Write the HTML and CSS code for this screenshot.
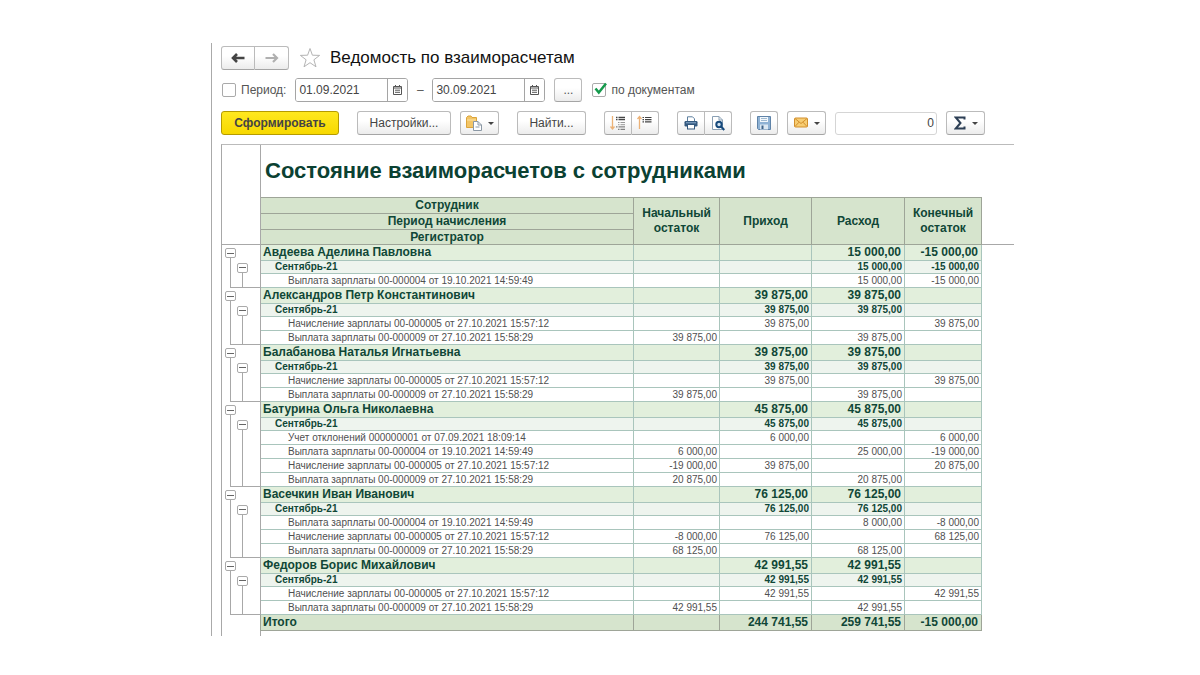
FILE: index.html
```html
<!DOCTYPE html>
<html lang="ru">
<head>
<meta charset="utf-8">
<title>Ведомость по взаиморасчетам</title>
<link rel="stylesheet" href="styles.css">
</head>
<body>
<main class="window">
  <header class="titlebar">
    <div class="group">
      <button class="btn nav" aria-label="Назад"><svg width="14" height="10" viewBox="0 0 14 10"><path d="M2 5H13.500M6 1L2 5L6 9" fill="none" stroke="#444" stroke-width="2.6"/></svg></button>
      <button class="btn nav" aria-label="Вперед"><svg width="14" height="10" viewBox="0 0 14 10"><path d="M.5 5H12M8 1L12 5L8 9" fill="none" stroke="#b0b0b0" stroke-width="2.200"/></svg></button>
    </div>
    <svg class="star" width="22" height="22" viewBox="0 0 22 22"><path d="M11 1.5L13.4 8.2L20.6 8.4L14.9 12.8L17 19.8L11 15.7L5 19.8L7.1 12.8L1.4 8.4L8.6 8.2Z" fill="#fff" stroke="#b4b4b4" stroke-width="1"/></svg>
    <h1>Ведомость по взаиморасчетам</h1>
  </header>

  <form class="period">
    <input type="checkbox" class="check" id="use-period"><label for="use-period">Период:</label>
    <div class="date"><input type="text" value="01.09.2021" aria-label="Начало периода"><button type="button" aria-label="Календарь"><svg width="9" height="10" viewBox="0 0 9 10"><path d="M.5 1.5H8.5V9.5H.5ZM.5 3H8.5M2.5 0V2M6.5 0V2M2 5.2H7M2 7.3H7" fill="none" stroke="#555"/></svg></button></div>
    <span class="dash">–</span>
    <div class="date"><input type="text" value="30.09.2021" aria-label="Конец периода"><button type="button" aria-label="Календарь"><svg width="9" height="10" viewBox="0 0 9 10"><path d="M.5 1.5H8.5V9.5H.5ZM.5 3H8.5M2.5 0V2M6.5 0V2M2 5.2H7M2 7.3H7" fill="none" stroke="#555"/></svg></button></div>
    <button type="button" class="btn more">...</button>
    <input type="checkbox" class="check" id="by-docs" checked><label for="by-docs">по документам</label>
  </form>

  <div class="toolbar">
    <button class="btn primary">Сформировать</button>
    <button class="btn settings">Настройки...</button>
    <button class="btn drop tight" aria-label="Варианты отчета"><svg width="16" height="16" viewBox="0 0 16 16"><path d="M.5 2.5L2 1H5L6 2.5H10.5V12.5H.5Z" fill="#f3c566" stroke="#dca53c"/><path d="M1 5H10" stroke="#fbe3a6"/><path d="M7.5 6.5H12L15.5 10V15.5H7.5Z" fill="#fff" stroke="#8b98a5"/><path d="M12 6.5V10H15.5M9.5 12H13.5" fill="none" stroke="#8b98a5"/></svg><i class="caret"></i></button>
    <button class="btn find">Найти...</button>
    <div class="group">
      <button class="btn icon" aria-label="Развернуть группы"><svg width="16" height="16" viewBox="0 0 16 16"><path d="M2.500 1V14M.5 11.500L2.500 14L4.500 11.500" fill="none" stroke="#ecb277" stroke-width="1.300"/><path d="M6 2.500H7.500M8.500 2.500H15M6 4.700H7.500M8.500 4.700H15" stroke="#444" stroke-width="1.300"/><path d="M8 7.500H9.500M10.500 7.500H15M8 9.700H9.500M10.500 9.700H15" stroke="#999"/><path d="M6 11.900H7.500M8.500 11.900H15M8 14.300H9.500M10.500 14.300H15" stroke="#666"/></svg></button>
      <button class="btn icon" aria-label="Свернуть группы"><svg width="16" height="16" viewBox="0 0 16 16"><path d="M2.500 14V1.500M.5 4L2.500 1.500L4.500 4" fill="none" stroke="#ecb277" stroke-width="1.300"/><path d="M5.500 2.500H7M8 2.500H14.500M5.500 4.700H7M8 4.700H14.500M5.500 6.900H7M8 6.900H14.500" stroke="#444" stroke-width="1.200"/></svg></button>
    </div>
    <div class="group">
      <button class="btn icon" aria-label="Печать"><svg width="14" height="14" viewBox="0 0 14 14"><path d="M3.500 5V.8H8.500L10.500 2.800V5" fill="#fff" stroke="#5d7f9f"/><rect x=".5" y="5" width="13" height="5.500" rx="1.200" fill="#34597f"/><rect x="3.500" y="8.500" width="7" height="4.500" fill="#fff" stroke="#34597f"/><path d="M2 6.800H12" stroke="#8fb0cf"/></svg></button>
      <button class="btn icon" aria-label="Предварительный просмотр"><svg width="14" height="15" viewBox="0 0 14 15"><path d="M1.500 .5H8L11.500 4V13.500H1.500Z" fill="#fff" stroke="#8aa0b4"/><path d="M8 .5V4H11.500" fill="none" stroke="#8aa0b4"/><circle cx="8" cy="8.500" r="2.700" fill="#cfe2f2" stroke="#174a7c" stroke-width="2"/><path d="M10 10.500L13.300 14" stroke="#174a7c" stroke-width="2.200"/></svg></button>
    </div>
    <button class="btn icon save" aria-label="Сохранить"><svg width="14" height="14" viewBox="0 0 14 14"><path d="M.5 .5H13.500V13.500H1.500L.5 12.500Z" fill="#8fb2d4" stroke="#5f83a8"/><rect x="3" y="1" width="8" height="5" fill="#f3f8fc"/><path d="M4 2.500H10M4 4.500H10" stroke="#9fb9d0"/><rect x="3" y="8.500" width="8" height="5" fill="#dce8f2"/><rect x="4.500" y="9.500" width="2" height="3.500" fill="#3f648a"/></svg></button>
    <button class="btn drop tight" aria-label="Отправить"><svg width="14" height="16" viewBox="0 0 14 16"><rect x=".5" y="3" width="13" height="9" rx="1" fill="#f7cd73" stroke="#d28f2c"/><path d="M1 3.500L7 8.500L13 3.500M1 11.500L5 7.200M13 11.500L9 7.200" fill="none" stroke="#d28f2c"/></svg><i class="caret"></i></button>
    <input class="sum tight" type="text" value="0" aria-label="Сумма">
    <button class="btn drop tight" aria-label="Сумма выделенных ячеек"><svg width="12" height="14" viewBox="0 0 12 14"><path d="M10.500 3.500V1.500H1.800L6.500 7L1.800 12.500H10.500V10.500" fill="none" stroke="#2d3f55" stroke-width="2"/></svg><i class="caret"></i></button>
  </div>

  <section class="report">
    <h2>Состояние взаиморасчетов с сотрудниками</h2>
    <table>
      <colgroup><col class="c-tree"><col><col class="c-start"><col class="c-in"><col class="c-out"><col class="c-end"><col class="c-rest"></colgroup>
      <thead>
        <tr><td class="tree"></td><th>Сотрудник</th><th rowspan="3">Начальный остаток</th><th rowspan="3">Приход</th><th rowspan="3">Расход</th><th rowspan="3">Конечный остаток</th><td class="rest"></td></tr>
        <tr><td class="tree"></td><th>Период начисления</th><td class="rest"></td></tr>
        <tr class="last"><td class="tree"></td><th>Регистратор</th><td class="rest"></td></tr>
      </thead>
      <tbody>
        <tr class="emp"><td class="tree"><button aria-label="Свернуть"></button></td><td>Авдеева Аделина Павловна</td><td></td><td></td><td>15 000,00</td><td>-15 000,00</td></tr>
        <tr class="month"><td class="tree"><button aria-label="Свернуть"></button></td><td>Сентябрь-21</td><td></td><td></td><td>15 000,00</td><td>-15 000,00</td></tr>
        <tr><td class="tree"></td><td>Выплата зарплаты 00-000004 от 19.10.2021 14:59:49</td><td></td><td></td><td>15 000,00</td><td>-15 000,00</td></tr>
      </tbody>
      <tbody>
        <tr class="emp"><td class="tree"><button aria-label="Свернуть"></button></td><td>Александров Петр Константинович</td><td></td><td>39 875,00</td><td>39 875,00</td><td></td></tr>
        <tr class="month"><td class="tree"><button aria-label="Свернуть"></button></td><td>Сентябрь-21</td><td></td><td>39 875,00</td><td>39 875,00</td><td></td></tr>
        <tr><td class="tree"></td><td>Начисление зарплаты 00-000005 от 27.10.2021 15:57:12</td><td></td><td>39 875,00</td><td></td><td>39 875,00</td></tr>
        <tr><td class="tree"></td><td>Выплата зарплаты 00-000009 от 27.10.2021 15:58:29</td><td>39 875,00</td><td></td><td>39 875,00</td><td></td></tr>
      </tbody>
      <tbody>
        <tr class="emp"><td class="tree"><button aria-label="Свернуть"></button></td><td>Балабанова Наталья Игнатьевна</td><td></td><td>39 875,00</td><td>39 875,00</td><td></td></tr>
        <tr class="month"><td class="tree"><button aria-label="Свернуть"></button></td><td>Сентябрь-21</td><td></td><td>39 875,00</td><td>39 875,00</td><td></td></tr>
        <tr><td class="tree"></td><td>Начисление зарплаты 00-000005 от 27.10.2021 15:57:12</td><td></td><td>39 875,00</td><td></td><td>39 875,00</td></tr>
        <tr><td class="tree"></td><td>Выплата зарплаты 00-000009 от 27.10.2021 15:58:29</td><td>39 875,00</td><td></td><td>39 875,00</td><td></td></tr>
      </tbody>
      <tbody>
        <tr class="emp"><td class="tree"><button aria-label="Свернуть"></button></td><td>Батурина Ольга Николаевна</td><td></td><td>45 875,00</td><td>45 875,00</td><td></td></tr>
        <tr class="month"><td class="tree"><button aria-label="Свернуть"></button></td><td>Сентябрь-21</td><td></td><td>45 875,00</td><td>45 875,00</td><td></td></tr>
        <tr><td class="tree"></td><td>Учет отклонений 000000001 от 07.09.2021 18:09:14</td><td></td><td>6 000,00</td><td></td><td>6 000,00</td></tr>
        <tr><td class="tree"></td><td>Выплата зарплаты 00-000004 от 19.10.2021 14:59:49</td><td>6 000,00</td><td></td><td>25 000,00</td><td>-19 000,00</td></tr>
        <tr><td class="tree"></td><td>Начисление зарплаты 00-000005 от 27.10.2021 15:57:12</td><td>-19 000,00</td><td>39 875,00</td><td></td><td>20 875,00</td></tr>
        <tr><td class="tree"></td><td>Выплата зарплаты 00-000009 от 27.10.2021 15:58:29</td><td>20 875,00</td><td></td><td>20 875,00</td><td></td></tr>
      </tbody>
      <tbody>
        <tr class="emp"><td class="tree"><button aria-label="Свернуть"></button></td><td>Васечкин Иван Иванович</td><td></td><td>76 125,00</td><td>76 125,00</td><td></td></tr>
        <tr class="month"><td class="tree"><button aria-label="Свернуть"></button></td><td>Сентябрь-21</td><td></td><td>76 125,00</td><td>76 125,00</td><td></td></tr>
        <tr><td class="tree"></td><td>Выплата зарплаты 00-000004 от 19.10.2021 14:59:49</td><td></td><td></td><td>8 000,00</td><td>-8 000,00</td></tr>
        <tr><td class="tree"></td><td>Начисление зарплаты 00-000005 от 27.10.2021 15:57:12</td><td>-8 000,00</td><td>76 125,00</td><td></td><td>68 125,00</td></tr>
        <tr><td class="tree"></td><td>Выплата зарплаты 00-000009 от 27.10.2021 15:58:29</td><td>68 125,00</td><td></td><td>68 125,00</td><td></td></tr>
      </tbody>
      <tbody>
        <tr class="emp"><td class="tree"><button aria-label="Свернуть"></button></td><td>Федоров Борис Михайлович</td><td></td><td>42 991,55</td><td>42 991,55</td><td></td></tr>
        <tr class="month"><td class="tree"><button aria-label="Свернуть"></button></td><td>Сентябрь-21</td><td></td><td>42 991,55</td><td>42 991,55</td><td></td></tr>
        <tr><td class="tree"></td><td>Начисление зарплаты 00-000005 от 27.10.2021 15:57:12</td><td></td><td>42 991,55</td><td></td><td>42 991,55</td></tr>
        <tr><td class="tree"></td><td>Выплата зарплаты 00-000009 от 27.10.2021 15:58:29</td><td>42 991,55</td><td></td><td>42 991,55</td><td></td></tr>
      </tbody>
      <tfoot>
        <tr class="emp"><td class="tree"></td><td>Итого</td><td></td><td>244 741,55</td><td>259 741,55</td><td>-15 000,00</td></tr>
      </tfoot>
    </table>
    <div class="tail"></div>
  </section>
</main>
</body>
</html>
```
FILE: styles.css
```css
* { box-sizing: border-box; }
body {
  margin: 0;
  padding: 43px 186px 38px 211px;
  background: #fff;
  color: #444;
  font: 12px/16px "Liberation Sans", Arial, sans-serif;
}
.window { border-left: 1px solid #aaa; padding: 3px 0 0 9px; }
button, input { font: inherit; color: inherit; margin: 0; padding: 0; }
svg { display: block; flex: none; }

.titlebar { display: flex; align-items: center; height: 24px; }
.star { margin: 0 9px 0 10px; }
h1 { margin: 0; font-size: 17px; line-height: 24px; font-weight: 400; color: #111; white-space: nowrap; }

.btn {
  display: flex; align-items: center; justify-content: center;
  height: 24px;
  border: 1px solid #bbb; border-bottom-color: #a5a5a5; border-radius: 3px;
  background: linear-gradient(#fff 40%, #ececec);
}
.group { display: flex; }
.group .btn:first-child { border-radius: 3px 0 0 3px; }
.group .btn:last-child { border-radius: 0 3px 3px 0; border-left: 0; }
.nav { width: 34px; }

.period { display: flex; align-items: center; height: 24px; margin-top: 8px; white-space: nowrap; color: #555; }
.check {
  appearance: none; width: 14px; height: 14px; margin: 0 5px 0 1px;
  border: 1px solid #aaa; border-radius: 2px; background: #fff;
}
.check:checked {
  width: 16px; height: 18px; margin: 0 3px 0 10px; border: 0;
  background: url("data:image/svg+xml,%3Csvg xmlns='http://www.w3.org/2000/svg' viewBox='0 0 16 18'%3E%3Crect x='.5' y='2.500' width='13' height='13' rx='1.500' fill='%23fff' stroke='%23aaa'/%3E%3Cpath d='M3.500 7.500L6.800 11.500L14 2.500' fill='none' stroke='%23149a4c' stroke-width='2.500'/%3E%3C/svg%3E") no-repeat;
}
.date { display: flex; width: 113px; height: 24px; border: 1px solid #a5a5a5; border-radius: 3px; overflow: hidden; }
label + .date { margin-left: 9px; }
.date input { flex: 1; min-width: 0; border: 0; padding-left: 3px; color: #444; background: #fff; }
.date button { display: flex; align-items: center; justify-content: center; width: 20px; border: 0; border-left: 1px solid #a5a5a5; background: #fff; }
.dash { width: 24px; text-align: center; }
.more { width: 28px; margin-left: 9px; }

.toolbar { display: flex; align-items: center; gap: 18px; height: 24px; margin-top: 9px; }
.toolbar .btn { flex: none; }
.primary { width: 118px; border-color: #b59b00; background: linear-gradient(#ffe81f, #f7d800); font-weight: 700; }
.settings { width: 94px; }
.find { width: 69px; }
.drop { width: 39px; gap: 6px; }
.toolbar .tight { margin-left: -9px; }
.icon { width: 28px; }
.group .icon:last-child { width: 27px; }
.caret { border: 3px solid transparent; border-top-color: #444; border-bottom: 0; }
.sum { width: 102px; height: 23px; border: 1px solid #d5d5d5; border-radius: 3px; text-align: right; padding-right: 2px; }

.report { margin-top: 9px; border-top: 1px solid #bbb; border-left: 1px solid #a8a8a8; }
h2 {
  margin: 0; padding-left: 4px; border-left: 1px solid #a8a8a8;
  font-size: 22px; line-height: 52px; color: #0b4132; white-space: nowrap;
}
h2, .tail { margin-left: 38px; }
.tail { height: 5px; border-left: 1px solid #a8a8a8; }
table { width: 100%; border-collapse: separate; border-spacing: 0; table-layout: fixed; }
.c-tree { width: 39px; }
.c-start { width: 86px; }
.c-in { width: 92px; }
.c-out { width: 93px; }
.c-end { width: 77px; }
.c-rest { width: 32px; }

th, td { padding: 0 2px; border: 0 solid #a9c5bc; border-width: 0 1px 1px 0; white-space: nowrap; }
th { height: 16px; border-color: #9ea598; background: #d6e4cd; color: #104737; font-size: 12px; line-height: 15px; white-space: normal; }
thead tr:first-child th { height: 17px; border-top-width: 1px; }
thead .last th { height: 15px; line-height: 14px; }
.rest { border-width: 0; }
thead .last td { border-bottom: 1px solid #a8a8a8; }

tbody td { height: 14px; font-size: 10px; line-height: 13px; text-align: right; color: #505050; }
tr td:nth-child(2) { text-align: left; padding-left: 27px; }
.month td { height: 13px; line-height: 12px; font-weight: 700; color: #104737; background: #eef4ee; }
.month td:nth-child(2) { padding-left: 14px; }
.emp td { height: 16px; font-size: 12px; line-height: 15px; font-weight: 700; color: #104737; background: #e2efdc; text-align: right; }
.emp td:nth-child(n+3) { padding-right: 3px; }
.emp td:nth-child(2) { padding-left: 2px; text-align: left; }
tfoot .emp td { background: #d6e4cd; border-color: #9ea598; }

tr .tree { padding: 0; border-width: 0 1px 0 0; border-color: #a8a8a8; background: #fff; }
thead .last .tree { border-bottom-width: 1px; }
tbody .tree {
  background:
    linear-gradient(#a8a8a8, #a8a8a8) 8px 0 / 1px 100% no-repeat,
    linear-gradient(#a8a8a8, #a8a8a8) 20px 0 / 1px 100% no-repeat, #fff;
}
tbody .emp .tree { background: linear-gradient(#a8a8a8, #a8a8a8) 8px 8px / 1px 100% no-repeat, #fff; }
tbody .month .tree {
  background:
    linear-gradient(#a8a8a8, #a8a8a8) 8px 0 / 1px 100% no-repeat,
    linear-gradient(#a8a8a8, #a8a8a8) 20px 6px / 1px 100% no-repeat, #fff;
}
tbody tr:last-child .tree {
  background:
    linear-gradient(#a8a8a8, #a8a8a8) 8px 0 / 1px 100% no-repeat,
    linear-gradient(#a8a8a8, #a8a8a8) 20px 0 / 1px 100% no-repeat,
    linear-gradient(#a8a8a8, #a8a8a8) 8px 100% / 100% 1px no-repeat, #fff;
}
tfoot .emp .tree { background: #fff; }
.tree button {
  display: block; width: 11px; height: 10px; margin-left: 3px;
  border: 1px solid #aaa; border-radius: 2px;
  background: linear-gradient(#666, #666) 50% 50% / 7px 1px no-repeat, #fff;
}
.month .tree button { margin-left: 15px; }
```
